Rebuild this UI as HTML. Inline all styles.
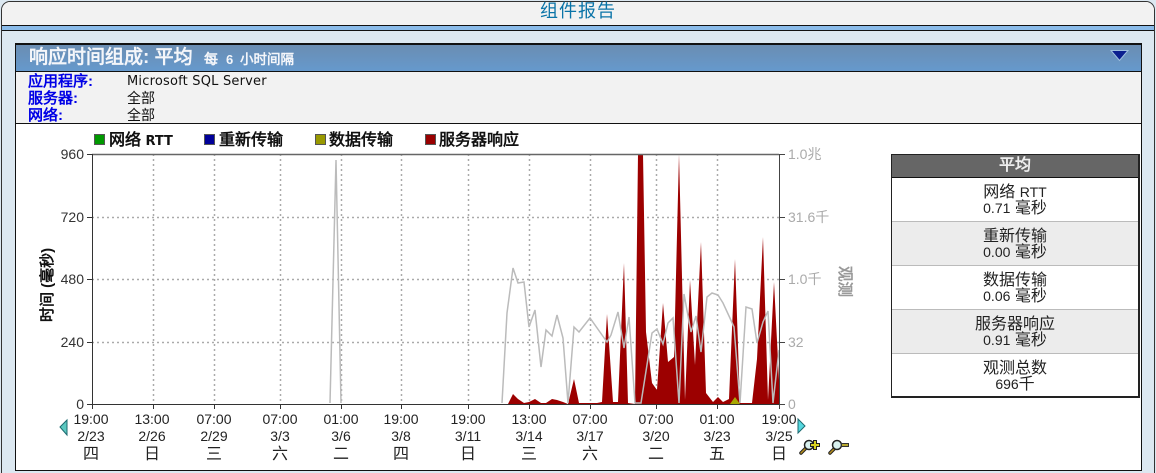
<!DOCTYPE html>
<html><head><meta charset="utf-8"><style>
html,body{margin:0;padding:0;width:1156px;height:473px;overflow:hidden;background:#dce8f1}
*{box-sizing:border-box}
.a{position:absolute;white-space:nowrap}
body{font-family:"Liberation Sans","WenQuanYi Zen Hei",sans-serif}
.t{font-family:"DejaVu Sans","WenQuanYi Zen Hei",sans-serif}
.row{position:absolute;left:1px;width:246px;height:44px;text-align:center;font-size:16px;line-height:16px;color:#222;padding-top:7px;border-bottom:1px solid #bbb}
.row span{font-size:14px;line-height:0}
</style></head><body>
<div class="a" style="left:1px;top:1px;width:1154px;height:472px;border:1px solid #333;border-bottom:0;border-radius:9px 9px 0 0"></div>
<div class="a" style="left:2px;top:2px;width:1152px;height:23px;background:#f2f2f2;border-radius:8px 8px 0 0"></div>
<div class="a" style="left:2px;top:25px;width:1152px;height:6px;background:#8abbe9;border-top:1px solid #111;border-bottom:1px solid #111"></div>
<div class="a" style="left:0;top:1px;width:1156px;text-align:center;font-size:18px;line-height:20px;color:#0a74a8;letter-spacing:1px">组件报告</div>

<div class="a" style="left:15px;top:43px;width:1127px;height:428px;background:#fff;border:1px solid #111;border-top:2px solid #111">
<div class="a" style="left:0;top:0;width:1125px;height:27px;background:linear-gradient(#6a8db2,#6699cc);border-bottom:1px solid #111"></div>
<div class="a" style="left:0;top:27px;width:1125px;height:52px;background:#f2f2f2;border-bottom:1px solid #111"></div>
</div>
<div class="a" style="left:29px;top:48px;font-size:19px;line-height:20px;color:#f4f6fa;font-weight:bold">响应时间组成: 平均</div>
<div class="a" style="left:204px;top:52px;font-size:14px;line-height:15px;color:#f4f6fa;font-weight:bold">每</div>
<div class="a" style="left:226px;top:52px;font-size:13px;line-height:15px;color:#f4f6fa;font-weight:bold">6</div>
<div class="a" style="left:240px;top:52px;font-size:13.500px;line-height:15px;color:#f4f6fa;font-weight:bold">小时间隔</div>
<svg class="a" style="left:1108px;top:48px" width="24" height="16"><path d="M3 2.500H20L11.500 12.500Z" fill="#0a1f8f" stroke="#9fc0e0" stroke-width="1"/></svg>

<div class="a" style="left:28px;top:73px;font-size:15px;line-height:17px;color:#0000e6;font-weight:bold">应用程序:<br>服务器:<br>网络:</div>
<div class="a t" style="left:127px;top:73px;font-size:13px;line-height:17px;color:#111;letter-spacing:.2px">Microsoft SQL Server</div>
<div class="a" style="left:127px;top:90px;font-size:14px;line-height:17px;color:#111">全部<br>全部</div>

<svg class="a" style="left:0;top:125px" width="880" height="345" viewBox="0 125 880 345" font-family="Liberation Sans, WenQuanYi Zen Hei, sans-serif">
<g stroke="#555" stroke-width="1">
<rect x="94.500" y="134.500" width="10" height="10" fill="#009900"/>
<rect x="204.500" y="134.500" width="10" height="10" fill="#000099"/>
<rect x="315.500" y="134.500" width="10" height="10" fill="#999900"/>
<rect x="425.500" y="134.500" width="10" height="10" fill="#990000"/>
</g>
<g font-size="16" font-weight="bold" fill="#111">
<text x="109" y="145">网络 <tspan font-size="13" font-family="DejaVu Sans, sans-serif">RTT</tspan></text>
<text x="219" y="145">重新传输</text>
<text x="329" y="145">数据传输</text>
<text x="439" y="145">服务器响应</text>
</g>
<g stroke="#aaa" stroke-width="1.500" stroke-dasharray="2 3" fill="none">
<path d="M92 217.500H779M92 279.500H779M92 342.500H779"/>
<path d="M153.500 154V404M214.500 154V404M280.500 154V404M341.500 154V404M401.500 154V404M468.500 154V404M529.500 154V404M590.500 154V404M656.500 154V404M717.500 154V404"/>
</g>
<path fill="#9c0000" d="M508 404L513 394L518 399L524 403L529 402L535 399L541 403L546 403L552 399L557 400L563 402L568 404L574 379L579 403L597 403L602 402L607 314L613 402L618 402L624 263L628 403L635 404L638 154L643 154L646 332L652 383L657 390L663 303L668 362L674 357L679 154L685 400L690 280L695 365L701 242L706 393L713 402L718 397L723 402L729 399L735 259L740 403L747 403L752 403L757 359L763 237L768 400L774 282L779 380V404Z"/>
<path fill="#a8a800" d="M730 404L735 397L740 404Z"/>
<path fill="none" stroke="#bbb" stroke-width="1.500" d="M330 403L336 160L341 403"/>
<path fill="none" stroke="#bbb" stroke-width="1.500" d="M502 403L507 313L513 268L518 283L524 282L529 327L535 310L541 367L546 330L552 336L557 315L563 338L568 403L574 327L579 332L590 318L607 342L611 335L618 312L624 348L629 317L635 403L641 403L652 333L657 329L663 344L668 323L673 318L679 403L684 294L691 332L696 316L701 352L707 297L712 293L718 295L723 303L729 316L734 327L740 403L746 307L752 309L757 343L763 322L768 311L773 403L779 350"/>
<path fill="none" stroke="#666" stroke-width="1.500" d="M92 154.500H779"/>
<path fill="none" stroke="#333" stroke-width="1" d="M92.500 154V404M87 154.500H92M87 217.500H92M87 279.500H92M87 342.500H92M87 404.500H779"/>
<path fill="none" stroke="#444" stroke-width="1" d="M779.500 154V409M779 154.500H785M779 217.500H785M779 279.500H785M779 342.500H785M779 404.500H785"/>
<path fill="none" stroke="#333" stroke-width="1" d="M92.500 404V409M153.500 404V409M214.500 404V409M280.500 404V409M341.500 404V409M401.500 404V409M468.500 404V409M529.500 404V409M590.500 404V409M656.500 404V409M717.500 404V409"/>
<g font-size="14" fill="#333" text-anchor="end">
<text x="84" y="159">960</text><text x="84" y="222">720</text><text x="84" y="284">480</text><text x="84" y="347">240</text><text x="84" y="409">0</text>
</g>
<g font-size="14" fill="#aaa">
<text x="788" y="159">1.0兆</text><text x="788" y="222">31.6千</text><text x="788" y="284">1.0千</text><text x="788" y="347">32</text><text x="788" y="409">0</text>
</g>
<g font-size="14" fill="#222" text-anchor="middle">
<g>
<text x="91" y="424">19:00</text><text x="152" y="424">13:00</text><text x="214" y="424">07:00</text><text x="280" y="424">07:00</text><text x="341" y="424">01:00</text><text x="401" y="424">19:00</text><text x="468" y="424">19:00</text><text x="529" y="424">13:00</text><text x="590" y="424">07:00</text><text x="656" y="424">07:00</text><text x="717" y="424">01:00</text><text x="779" y="424">19:00</text>
</g>
<text x="91" y="441">2/23</text><text x="152" y="441">2/26</text><text x="214" y="441">2/29</text><text x="280" y="441">3/3</text><text x="341" y="441">3/6</text><text x="401" y="441">3/8</text><text x="468" y="441">3/11</text><text x="529" y="441">3/14</text><text x="590" y="441">3/17</text><text x="656" y="441">3/20</text><text x="717" y="441">3/23</text><text x="779" y="441">3/25</text>
<g font-size="16">
<text x="91" y="459">四</text><text x="152" y="459">日</text><text x="214" y="459">三</text><text x="280" y="459">六</text><text x="341" y="459">二</text><text x="401" y="459">四</text><text x="468" y="459">日</text><text x="529" y="459">三</text><text x="590" y="459">六</text><text x="656" y="459">二</text><text x="717" y="459">五</text><text x="779" y="459">日</text>
</g>
</g>
<text transform="translate(52 322) rotate(-90)" font-size="15" font-weight="bold" fill="#111">时间 (毫秒)</text>
<text transform="translate(840 266) rotate(90)" font-size="15.500" font-weight="bold" fill="#999">观测</text>
<path d="M60 427L67 420V435Z" fill="#5cc8c0" stroke="#1c6a70"/>
<path d="M798 419L805 426L798 433Z" fill="#55d8e0" stroke="#1c6a70"/>
<path d="M801 453L806 448" stroke="#222" stroke-width="3.500" stroke-linecap="round"/>
<path d="M801 453L806 448" stroke="#b8901c" stroke-width="1.500" stroke-linecap="round"/>
<circle cx="809" cy="445" r="4.500" fill="#d8f0ee" stroke="#222" stroke-width="1.500"/>
<path d="M810 445H820M815 440V450" stroke="#222" stroke-width="4"/>
<path d="M811 445H819M815 441V449" stroke="#d8d020" stroke-width="2"/>
<path d="M830 453L835 448" stroke="#222" stroke-width="3.500" stroke-linecap="round"/>
<path d="M830 453L835 448" stroke="#b8901c" stroke-width="1.500" stroke-linecap="round"/>
<circle cx="837" cy="445" r="4.500" fill="#d8f0ee" stroke="#222" stroke-width="1.500"/>
<path d="M841 445H849" stroke="#333" stroke-width="4"/>
<path d="M842 445H848" stroke="#b8a830" stroke-width="2"/>
</svg>

<div class="a" style="left:891px;top:154px;width:249px;height:244px;border:1px solid #222;border-bottom:2px solid #222;background:#fff;border-right-width:2px">
<div class="a" style="left:0;top:0;width:246px;height:23px;background:#666;border-bottom:1px solid #111;color:#eee;font-weight:bold;font-size:16px;line-height:22px;text-align:center">平均</div>
<div class="row" style="top:23px;left:0;background:#fff">网络 <span>RTT</span><br><span>0.71</span> 毫秒</div>
<div class="row" style="top:67px;left:0;background:#ececec">重新传输<br><span>0.00</span> 毫秒</div>
<div class="row" style="top:111px;left:0;background:#fff">数据传输<br><span>0.06</span> 毫秒</div>
<div class="row" style="top:155px;left:0;background:#ececec">服务器响应<br><span>0.91</span> 毫秒</div>
<div class="row" style="top:199px;left:0;background:#fff;border:0;height:42px">观测总数<br><span>696</span>千</div>
</div>
</body></html>
